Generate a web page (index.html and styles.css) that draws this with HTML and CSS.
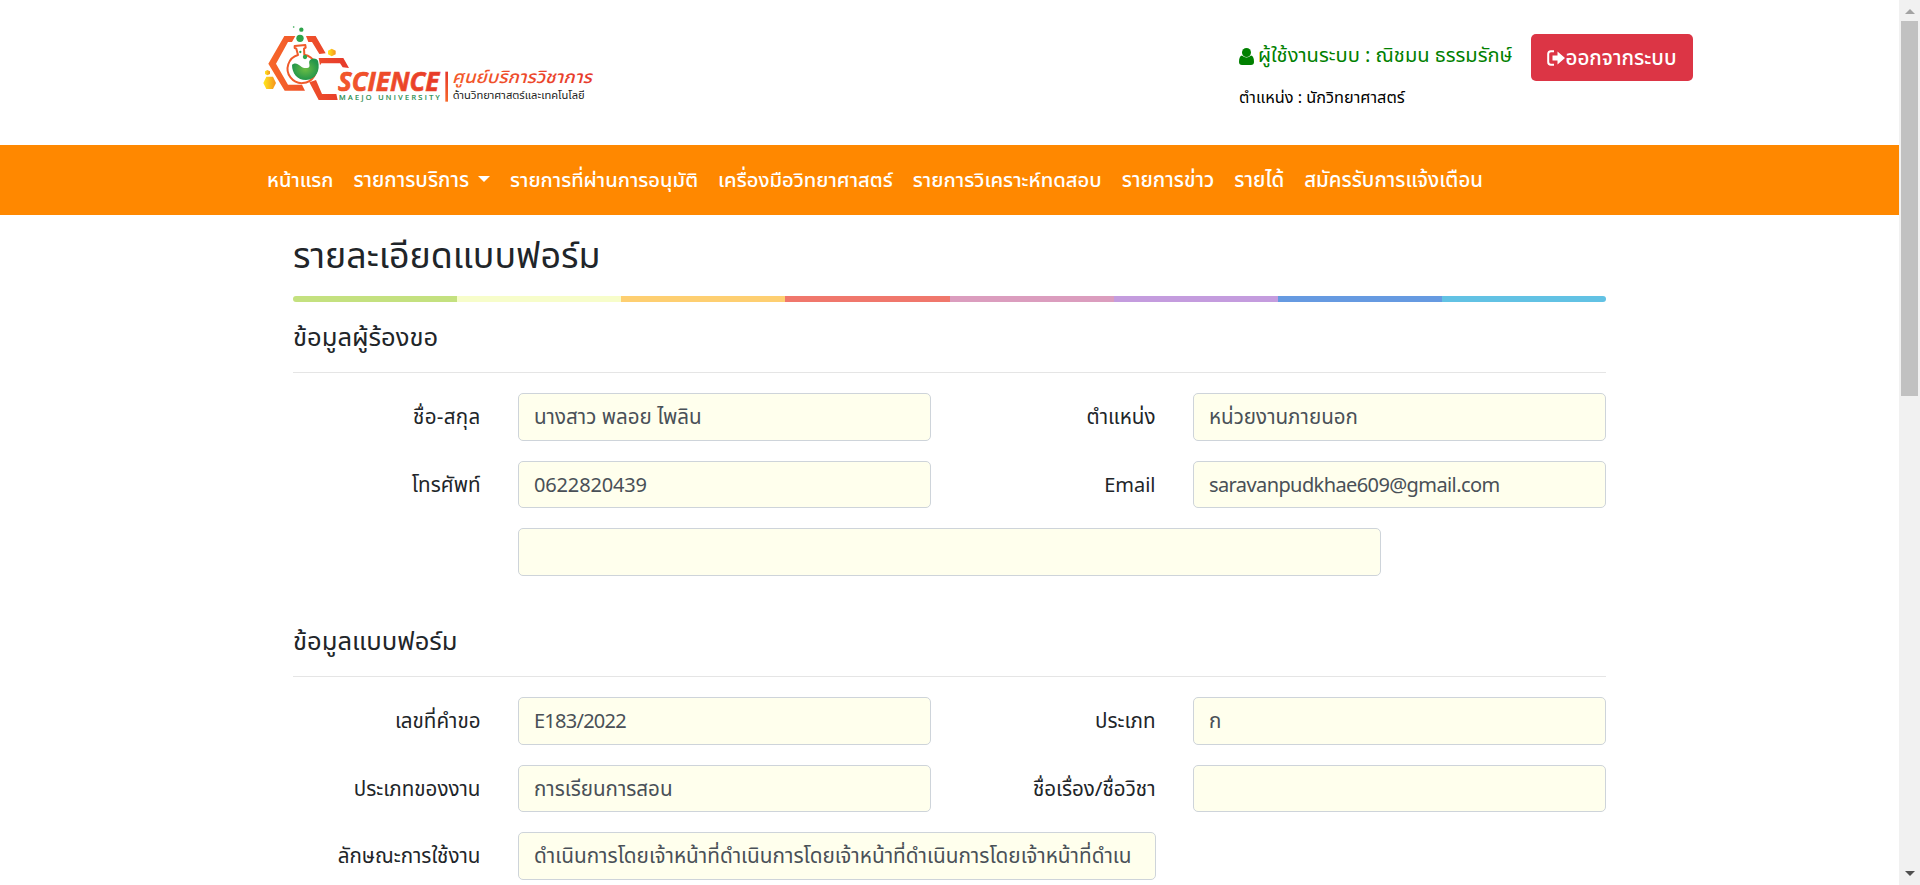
FILE: index.html
```html
<!DOCTYPE html>
<html lang="th">
<head>
<meta charset="utf-8">
<title>รายละเอียดแบบฟอร์ม</title>
<link rel="stylesheet" href="styles.css">
</head>
<body>
<div class="page">
<header class="top">
<svg class="logo" width="350" height="85" viewBox="0 0 1050 255">
<defs>
<linearGradient id="o" gradientUnits="userSpaceOnUse" x1="25" x2="265" y1="0" y2="0"><stop offset="0" stop-color="#f7682a"/><stop offset="1" stop-color="#e6392b"/></linearGradient>
<linearGradient id="s" x1="0" x2="1" y1="0" y2="0"><stop offset="0" stop-color="#f45a29"/><stop offset="1" stop-color="#e6392b"/></linearGradient>
<linearGradient id="b" x1="0" x2="0" y1="0" y2="1"><stop offset="0" stop-color="#e6392b"/><stop offset="1" stop-color="#f7682a"/></linearGradient>
<linearGradient id="y" x1="0" x2="1" y1="0" y2="0"><stop offset="0" stop-color="#ffe81c"/><stop offset="1" stop-color="#f6921e"/></linearGradient>
<radialGradient id="g"><stop offset="0" stop-color="#6bbd45"/><stop offset="1" stop-color="#23964a"/></radialGradient>
</defs>
<g fill="url(#o)">
<path d="M73 42H106L96 60H84L48 125 84 188H126L135 206H74L25 125Z"/>
<path d="M138 42H167L197 94 178 96 156 60H145Z"/>
<path d="M176 108H250L267 138 248 136 240 124H184L180 130Z"/>
<path d="M148 181 168 174 186 216H229L233 234H176Z"/>
</g>
<path d="M104 72 136 69 137 77 132 80 133 98A43 43 0 1 1 114 99L109 80 104 78Z" fill="#fff" stroke="#f05a2a" stroke-width="6" stroke-linejoin="round"/>
<path d="M96 128C116 114 121 145 145 137C154 132 142 120 151 113C159 107 169 108 174 116C182 146 167 173 138 174C112 174 96 154 96 128Z" fill="url(#g)"/>
<g fill="#2da44a"><circle cx="120" cy="49" r="11"/><circle cx="124" cy="23" r="6.500"/><circle cx="101" cy="15" r="2.500"/><circle cx="121" cy="90" r="3.500"/><circle cx="135" cy="105" r="6.500"/></g>
<g fill="url(#y)"><path d="M215 80 227 86V97L215 103 204 97V86Z"/><path d="M19 164H39L48 183 39 201H19L10 183Z"/><path d="M22 144 30 148V156L22 160 15 156V148Z"/></g>
<text class="l1" x="234" y="207" textLength="304" lengthAdjust="spacingAndGlyphs">SCIENCE</text>
<text class="l2" x="237" y="233" textLength="302">MAEJO UNIVERSITY</text>
<path d="M556 149H564V239H556Z" fill="url(#b)"/>
<text class="l3" x="576" y="184" textLength="419" lengthAdjust="spacingAndGlyphs">ศูนย์บริการวิชาการ</text>
<text class="l4" x="578" y="232" textLength="396" lengthAdjust="spacingAndGlyphs">ด้านวิทยาศาสตร์และเทคโนโลยี</text>
</svg>
<div class="user">
<div class="name"><svg width="15" height="17" viewBox="0 0 15 17"><circle cx="7.500" cy="4.500" r="4.500"/><path d="M3 7.500Q7.500 11.500 12 7.500 15 8 15 14 15 17 12 17H3Q0 17 0 14 0 8 3 7.500Z"/></svg><span>ผู้ใช้งานระบบ : ณิชมน ธรรมรักษ์</span></div>
<div class="role">ตำแหน่ง : นักวิทยาศาสตร์</div>
</div>
<a class="logout"><svg width="18" height="16" viewBox="0 0 18 16"><path d="M7 1.200H4Q1.200 1.200 1.200 4V12Q1.200 14.800 4 14.800H7" fill="none" stroke="#fff" stroke-width="2"/><path d="M5.500 5.500H10.500V1.500L18 8 10.500 14.500V10.500H5.500Z" fill="#fff"/></svg><span>ออกจากระบบ</span></a>
</header>
<nav class="nav">
<a class="n1">หน้าแรก</a><a>รายการบริการ<i class="caret"></i></a><a class="n3">รายการที่ผ่านการอนุมัติ</a><a class="n4">เครื่องมือวิทยาศาสตร์</a><a class="n5">รายการวิเคราะห์ทดสอบ</a><a class="n6">รายการข่าว</a><a class="n6">รายได้</a><a>สมัครรับการแจ้งเตือน</a>
</nav>
<main class="main">
<h1>รายละเอียดแบบฟอร์ม</h1>
<div class="bar"><i class="c1"></i><i class="c2"></i><i class="c3"></i><i class="c4"></i><i class="c5"></i><i class="c6"></i><i class="c7"></i><i class="c8"></i></div>
<section>
<h2>ข้อมูลผู้ร้องขอ</h2>
<div class="row"><label class="wide">ชื่อ-สกุล</label><div class="f">นางสาว พลอย ไพลิน</div><label>ตำแหน่ง</label><div class="f">หน่วยงานภายนอก</div></div>
<div class="row"><label>โทรศัพท์</label><div class="f num">0622820439</div><label class="en">Email</label><div class="f mail">saravanpudkhae609@gmail.com</div></div>
<div class="row"><label></label><div class="f w8"></div></div>
</section>
<section>
<h2>ข้อมูลแบบฟอร์ม</h2>
<div class="row"><label>เลขที่คำขอ</label><div class="f code">E183/2022</div><label>ประเภท</label><div class="f">ก</div></div>
<div class="row"><label>ประเภทของงาน</label><div class="f">การเรียนการสอน</div><label>ชื่อเรื่อง/ชื่อวิชา</label><div class="f"></div></div>
<div class="row"><label>ลักษณะการใช้งาน</label><div class="f w6">ดำเนินการโดยเจ้าหน้าที่ดำเนินการโดยเจ้าหน้าที่ดำเนินการโดยเจ้าหน้าที่ดำเน</div></div>
</section>
</main>
</div>
<div class="scroll"><i class="up"></i><i class="thumb"></i><i class="down"></i></div>
</body>
</html>
```
FILE: styles.css
```css
* { box-sizing: border-box; }
body { margin: 0; height: 885px; overflow: hidden; display: flex; background: #fff; color: #212529; font: 20.6px/30px "Noto Sans Thai", "Open Sans", "Noto Sans", sans-serif; }
.page { flex: 1; min-width: 0; white-space: nowrap; }

.top { height: 145px; padding-left: 260px; display: flex; align-items: flex-start; }
.logo { margin: 22px 629px 0 0; flex: none; }
.l1 { font: italic 700 78px "Open Sans", sans-serif; fill: url(#s); stroke: #ee4c2a; stroke-width: 2px; }
.l2 { font: 22px "Open Sans", sans-serif; fill: #138542; stroke: #138542; stroke-width: 0.6px; }
.l3 { font: italic 500 52px/1 "Noto Sans Thai", "Open Sans", sans-serif; fill: url(#s); }
.l4 { font: 34px/1 "Noto Sans Thai", "Open Sans", sans-serif; fill: #222; }
.user { width: 292px; padding-top: 41px; flex: none; color: #000; }
.name { display: flex; align-items: center; gap: 4px; color: green; fill: green; font-size: 20.1px; }
.role { font-size: 16.3px; margin-top: 12px; }
.logout { margin-top: 34px; width: 162px; height: 47px; flex: none; background: #dc3545; color: #fff; border-radius: 5px; display: flex; align-items: center; justify-content: center; }
.logout span { font-weight: 500; font-size: 20.6px; padding-top: 2px; }

.nav { height: 70px; background: #ff8800; color: #fff; display: flex; align-items: center; padding: 2px 0 0 257px; font-weight: 500; font-size: 20.43px; }
.nav a { padding: 0 10px; display: flex; align-items: center; flex: none; }
.nav .n1 { font-size: 20px; }
.nav .n3 { font-size: 20.15px; }
.nav .n4 { font-size: 20.2px; }
.nav .n5 { font-size: 20.3px; }
.nav .n6 { font-size: 20.5px; }
.caret { margin: -4px 0 0 9px; border: 6px solid transparent; border-top-color: #fff; border-bottom: 0; }

.main { width: 1313px; margin-left: 293px; }
h1 { margin: 0; height: 81px; font-size: 35.8px; line-height: 84px; font-weight: 400; }
.bar { height: 6px; display: flex; border-radius: 5px; overflow: hidden; }
.bar i { flex: 1; }
.c1 { background: #c4e17f; }
.c2 { background: #f7fdca; }
.c3 { background: #fecf71; }
.c4 { background: #f0776c; }
.c5 { background: #db9dbe; }
.c6 { background: #c49cde; }
.c7 { background: #669ae1; }
.c8 { background: #62c2e4; }
section { height: 304px; }
h2 { margin: 0 0 20px; height: 71px; line-height: 73px; font-size: 25.6px; font-weight: 400; border-bottom: 1px solid #e5e5e5; }
.row { display: flex; margin-bottom: 20px; height: 47.5px; }
label { width: 225px; padding-right: 37.5px; text-align: right; line-height: 49px; flex: none; }
.f { width: 412.5px; border: 1px solid #ced4da; border-radius: 5px; background: #ffffed; color: #495057; padding: 0 15px; line-height: 47px; flex: none; }
.f + label { width: 262.5px; }
.w8 { width: 862.5px; }
.w6 { width: 637.5px; font-size: 20.75px; }
.wide { letter-spacing: 0.3px; }
.en { font-size: 20px; line-height: 51px; }
.num { font-size: 20px; letter-spacing: -0.15px; line-height: 49px; }
.mail { font-size: 20px; letter-spacing: -0.6px; line-height: 49px; }
.code { font-size: 20px; letter-spacing: -0.75px; line-height: 49px; }

.scroll { width: 21px; background: #f1f1f1; display: flex; flex-direction: column; align-items: center; }
.scroll i { flex: none; }
.up { margin: 9px 0 7px; border: 5px solid transparent; border-bottom-color: #a3a3a3; border-top: 0; }
.thumb { width: 17px; height: 375px; background: #c1c1c1; }
.down { margin-top: 475px; border: 5px solid transparent; border-top-color: #505050; border-bottom: 0; }
```
